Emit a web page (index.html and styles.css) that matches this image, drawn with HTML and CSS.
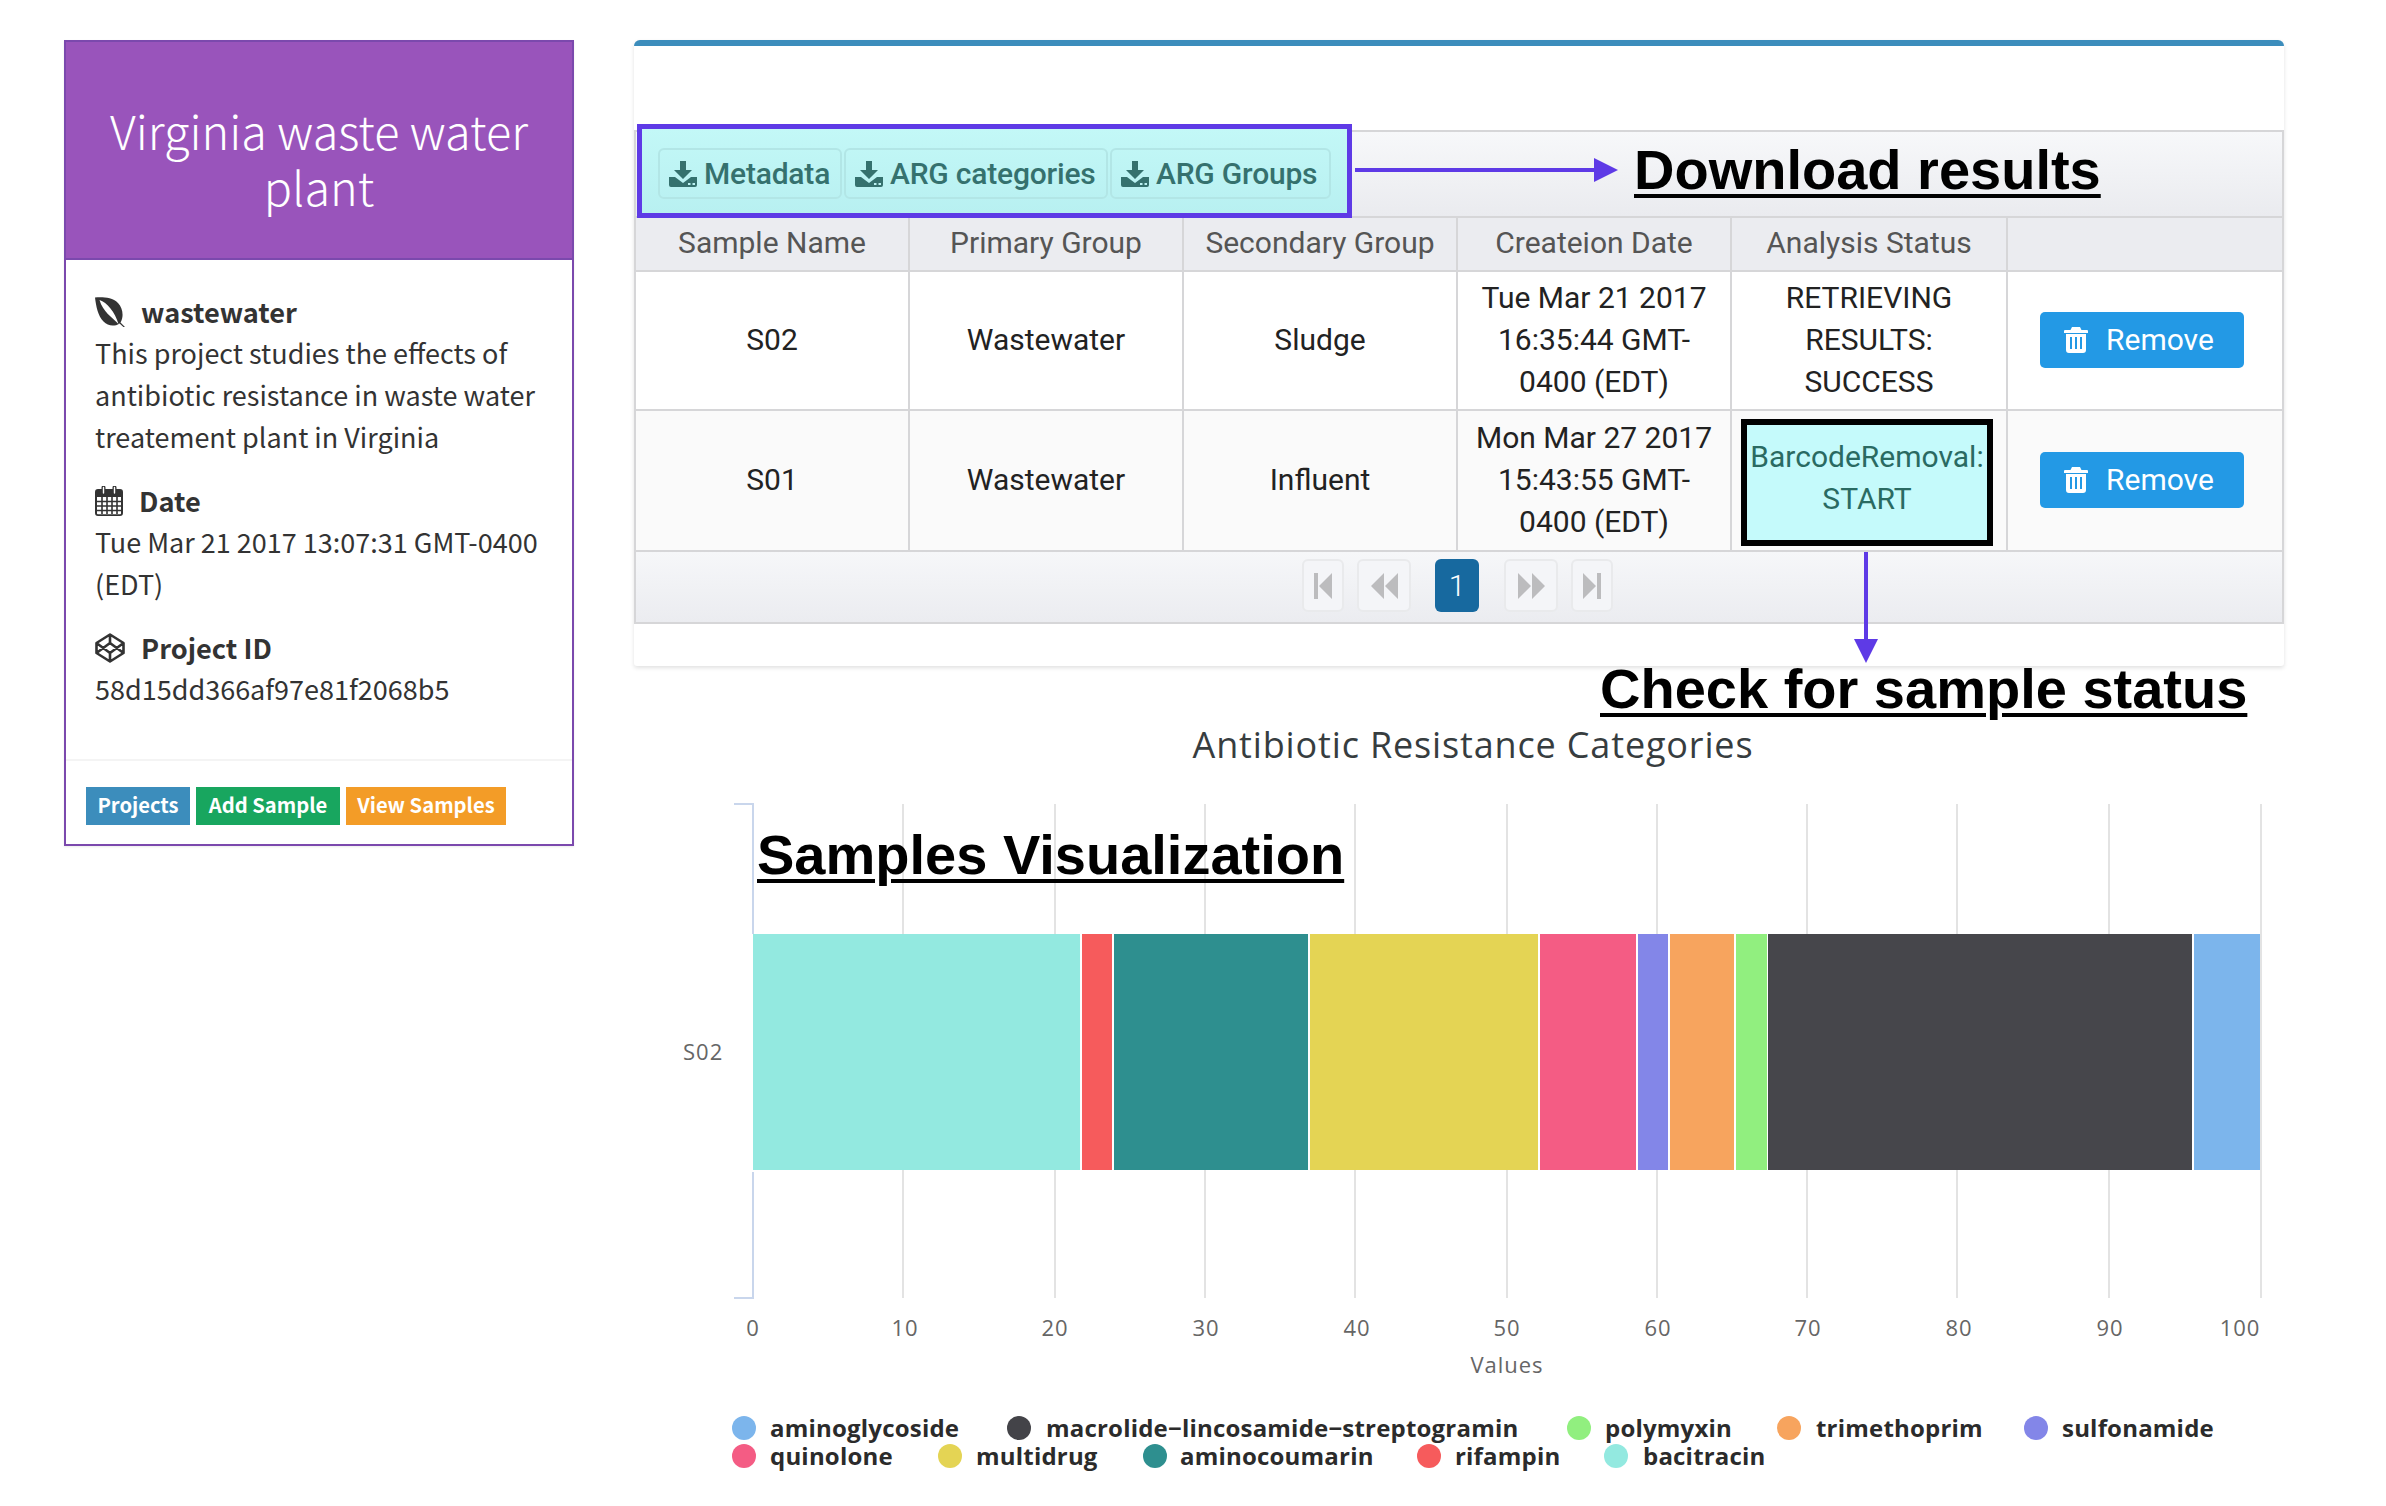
FILE: index.html
```html
<!DOCTYPE html>
<html lang="en">
<head>
<meta charset="utf-8">
<title>Virginia waste water plant</title>
<link rel="stylesheet" href="styles.css">
</head>
<body>
<div class="page">
  <aside class="card">
    <header class="card-head">Virginia waste water plant</header>
    <div class="card-body">
      <section class="info">
        <h3 class="label">
          <svg class="ico" width="30" height="30" viewBox="0 0 30 30"><path fill="#333" d="M0 .5C7 0 17 0 23 6c5 5 6 14 2.500 19.500L30 30l-.8.8-4.600-4.400C19 30 13 29 8.500 24.500 3 19 1 9 0 .5Z"/><path fill="#fff" d="M4.500 3C12 5.500 20 15 23.500 27 17 20 8 15 4.500 3Z"/></svg>
          wastewater
        </h3>
        <p class="text">This project studies the effects of antibiotic resistance in waste water treatement plant in Virginia</p>
      </section>
      <section class="info">
        <h3 class="label">
          <svg class="ico" width="28" height="30" viewBox="0 0 28 30"><path fill="#333" d="M3 3h3.500V1.500a2 2 0 0 1 4 0V3h7V1.500a2 2 0 0 1 4 0V3H25a3 3 0 0 1 3 3v21a3 3 0 0 1-3 3H3a3 3 0 0 1-3-3V6a3 3 0 0 1 3-3Z"/><path fill="#fff" d="M7.800 1.500a.7.7 0 0 1 1.400 0V7a.7.7 0 0 1-1.400 0ZM18.800 1.500a.7.7 0 0 1 1.400 0V7a.7.7 0 0 1-1.400 0ZM2 11h24v16.500a.8.8 0 0 1-.8.8H2.800a.8.8 0 0 1-.8-.8Z"/><path stroke="#333" stroke-width="1.600" fill="none" d="M2 15.500h24M2 20h24M2 24.500h24M7 11v17M12 11v17M17 11v17M22 11v17"/></svg>
          Date
        </h3>
        <p class="text">Tue Mar 21 2017 13:07:31 GMT-0400 (EDT)</p>
      </section>
      <section class="info">
        <h3 class="label">
          <svg class="ico" width="30" height="30" viewBox="0 0 30 30"><path fill="none" stroke="#333" stroke-width="2.600" stroke-linejoin="round" d="M15 1.500 28.500 10v10L15 28.500 1.500 20V10ZM15 1.500V10M15 20v8.500M1.500 10 15 20l13.500-10M1.500 20 15 10l13.500 10"/></svg>
          Project ID
        </h3>
        <p class="text">58d15dd366af97e81f2068b5</p>
      </section>
    </div>
    <footer class="card-foot">
      <a class="tag tag-blue">Projects</a>
      <a class="tag tag-green">Add Sample</a>
      <a class="tag tag-orange">View Samples</a>
    </footer>
  </aside>

  <main class="main">
    <div class="panel">
      <div class="toolbar">
        <div class="tools">
          <button class="dl dl-meta"><svg width="28" height="26" viewBox="0 0 28 26"><path class="dl-ico" fill-rule="evenodd" d="M11 0h6v9h6L14 18 5 9h6ZM0 16h6l8 6 8-6h6v8a2 2 0 0 1-2 2H2a2 2 0 0 1-2-2Zm19 6v2h2.500v-2Zm4.500 0v2H26v-2Z"/></svg>Metadata</button>
          <button class="dl dl-cat"><svg width="28" height="26" viewBox="0 0 28 26"><path class="dl-ico" fill-rule="evenodd" d="M11 0h6v9h6L14 18 5 9h6ZM0 16h6l8 6 8-6h6v8a2 2 0 0 1-2 2H2a2 2 0 0 1-2-2Zm19 6v2h2.500v-2Zm4.500 0v2H26v-2Z"/></svg>ARG categories</button>
          <button class="dl dl-group"><svg width="28" height="26" viewBox="0 0 28 26"><path class="dl-ico" fill-rule="evenodd" d="M11 0h6v9h6L14 18 5 9h6ZM0 16h6l8 6 8-6h6v8a2 2 0 0 1-2 2H2a2 2 0 0 1-2-2Zm19 6v2h2.500v-2Zm4.500 0v2H26v-2Z"/></svg>ARG Groups</button>
        </div>
        <div class="h-arrow"><span class="h-shaft"></span><span class="h-head"></span></div>
        <strong class="note note-dl">Download results</strong>
      </div>
      <table class="grid">
        <colgroup><col class="c1"><col class="c2"><col class="c3"><col class="c4"><col class="c5"><col class="c6"></colgroup>
        <thead>
          <tr><th>Sample Name</th><th>Primary Group</th><th>Secondary Group</th><th>Createion Date</th><th>Analysis Status</th><th></th></tr>
        </thead>
        <tbody>
          <tr class="row-a">
            <td>S02</td><td>Wastewater</td><td>Sludge</td>
            <td>Tue Mar 21 2017 16:35:44 GMT-0400 (EDT)</td>
            <td>RETRIEVING RESULTS: SUCCESS</td>
            <td><button class="remove"><svg width="24" height="26" viewBox="0 0 24 26"><path fill="#fff" fill-rule="evenodd" d="M8 0h8l1.500 3H23a1 1 0 0 1 1 1v2H0V4a1 1 0 0 1 1-1h5.500ZM2 7h20v16a3 3 0 0 1-3 3H5a3 3 0 0 1-3-3Zm4 3v12h2V10Zm5 0v12h2V10Zm5 0v12h2V10Z"/></svg>Remove</button></td>
          </tr>
          <tr class="row-b">
            <td>S01</td><td>Wastewater</td><td>Influent</td>
            <td>Mon Mar 27 2017 15:43:55 GMT-0400 (EDT)</td>
            <td><div class="status-box">BarcodeRemoval: START</div></td>
            <td><button class="remove"><svg width="24" height="26" viewBox="0 0 24 26"><path fill="#fff" fill-rule="evenodd" d="M8 0h8l1.500 3H23a1 1 0 0 1 1 1v2H0V4a1 1 0 0 1 1-1h5.500ZM2 7h20v16a3 3 0 0 1-3 3H5a3 3 0 0 1-3-3Zm4 3v12h2V10Zm5 0v12h2V10Zm5 0v12h2V10Z"/></svg>Remove</button></td>
          </tr>
        </tbody>
      </table>
      <nav class="pager">
        <a class="pg pg-s"><svg width="18" height="26" viewBox="0 0 18 26"><path class="pg-ico" d="M0 0h4v26H0ZM18 0v26L5 13Z"/></svg></a>
        <a class="pg pg-m"><svg width="27" height="26" viewBox="0 0 27 26"><path class="pg-ico" d="M13 0v26L0 13ZM27 0v26L14 13Z"/></svg></a>
        <a class="pg pg-now">1</a>
        <a class="pg pg-m pg-next"><svg width="27" height="26" viewBox="0 0 27 26"><path class="pg-ico" d="M0 0v26l13-13ZM14 0v26l13-13Z"/></svg></a>
        <a class="pg pg-s"><svg width="18" height="26" viewBox="0 0 18 26"><path class="pg-ico" d="M14 0h4v26h-4ZM0 0v26l13-13Z"/></svg></a>
      </nav>
      <div class="v-arrow"><span class="v-shaft"></span><span class="v-head"></span></div>
    </div>

    <strong class="note note-check">Check for sample status</strong>

    <section class="chart">
      <strong class="note note-vis">Samples Visualization</strong>
      <svg class="chart-svg" viewBox="634 690 1650 816">
        <text class="c-title" x="1473" y="758" text-anchor="middle">Antibiotic Resistance Categories</text>
        <g class="c-grid">
          <path d="M903 804V1298M1055 804V1298M1205 804V1298M1355 804V1298M1507 804V1298M1657 804V1298M1807 804V1298M1957 804V1298M2109 804V1298M2261 804V1298"/>
        </g>
        <path class="c-axis" d="M734 804H753V1298H734"/>
        <rect x="752" y="934" width="2" height="238" fill="#fff"/>
        <g>
          <rect x="753" y="934" width="327" height="236" fill="#93e9e0"/>
          <rect x="1082" y="934" width="30" height="236" fill="#f65b5c"/>
          <rect x="1114" y="934" width="194" height="236" fill="#2e8f8f"/>
          <rect x="1310" y="934" width="228" height="236" fill="#e4d454"/>
          <rect x="1540" y="934" width="96" height="236" fill="#f45c84"/>
          <rect x="1638" y="934" width="30" height="236" fill="#8386e8"/>
          <rect x="1670" y="934" width="64" height="236" fill="#f7a45e"/>
          <rect x="1736" y="934" width="31" height="236" fill="#91ef7f"/>
          <rect x="1768" y="934" width="424" height="236" fill="#46464b"/>
          <rect x="2194" y="934" width="66" height="236" fill="#7cb5ec"/>
        </g>
        <text class="c-lab" x="683" y="1060">S02</text>
        <g class="c-lab" text-anchor="middle">
          <text x="753" y="1336">0</text><text x="905" y="1336">10</text><text x="1055" y="1336">20</text><text x="1206" y="1336">30</text><text x="1357" y="1336">40</text><text x="1507" y="1336">50</text><text x="1658" y="1336">60</text><text x="1808" y="1336">70</text><text x="1959" y="1336">80</text><text x="2110" y="1336">90</text><text x="2240" y="1336">100</text>
          <text x="1507" y="1373">Values</text>
        </g>
        <g class="c-leg">
          <circle cx="744" cy="1428" r="12" fill="#7cb5ec"/><text x="770" y="1437">aminoglycoside</text>
          <circle cx="1019" cy="1428" r="12" fill="#434348"/><text x="1046" y="1437">macrolide−lincosamide−streptogramin</text>
          <circle cx="1579" cy="1428" r="12" fill="#91ef7f"/><text x="1605" y="1437">polymyxin</text>
          <circle cx="1789" cy="1428" r="12" fill="#f7a45e"/><text x="1816" y="1437">trimethoprim</text>
          <circle cx="2036" cy="1428" r="12" fill="#8386e8"/><text x="2062" y="1437">sulfonamide</text>
          <circle cx="744" cy="1456" r="12" fill="#f45c84"/><text x="770" y="1465">quinolone</text>
          <circle cx="950" cy="1456" r="12" fill="#e4d454"/><text x="976" y="1465">multidrug</text>
          <circle cx="1155" cy="1456" r="12" fill="#2e8f8f"/><text x="1180" y="1465">aminocoumarin</text>
          <circle cx="1429" cy="1456" r="12" fill="#f65b5c"/><text x="1455" y="1465">rifampin</text>
          <circle cx="1616" cy="1456" r="12" fill="#93e9e0"/><text x="1643" y="1465">bacitracin</text>
        </g>
      </svg>
    </section>
  </main>
</div>
</body>
</html>
```

FILE: styles.css
```css
* { box-sizing: border-box; }
html, body { margin: 0; padding: 0; background: #fff; }
.page {
  position: relative;
  display: flex;
  align-items: flex-start;
  width: 2386px;
  height: 1506px;
  padding: 40px 0 0 64px;
  overflow: hidden;
  font-family: Roboto, "Liberation Sans", sans-serif;
}

/* project card */
.card {
  width: 510px;
  height: 806px;
  flex: none;
  border: 2px solid #7b49ad;
  background: #fff;
  box-shadow: 0 1px 2px rgba(0, 0, 0, .08);
  display: flex;
  flex-direction: column;
  font-family: "Noto Sans CJK SC", "Noto Sans", sans-serif;
  color: #333;
}
.card-head {
  height: 218px;
  flex: none;
  padding: 60px 20px 0;
  background: #9954bb;
  border-bottom: 2px solid #7b49ad;
  color: #fff;
  font-size: 46.800px;
  font-weight: 300;
  line-height: 56px;
  text-align: center;
}
.card-body { flex: 1; padding: 31px 20px 0 29px; }
.info { margin-bottom: 22px; }
.label {
  display: flex;
  align-items: center;
  gap: 16px;
  margin: 0;
  font-size: 27.200px;
  font-weight: 700;
  line-height: 41px;
}
.ico { flex: none; }
.text { margin: 0; font-size: 27px; line-height: 42px; }
.card-foot {
  flex: none;
  display: flex;
  gap: 6px;
  height: 85px;
  padding: 26px 0 0 20px;
  border-top: 2px solid #f4f4f4;
}
.tag {
  height: 38px;
  color: #fff;
  font-size: 20.200px;
  font-weight: 700;
  line-height: 36px;
  text-align: center;
}
.tag-blue { width: 104px; background: #3c8dbc; }
.tag-green { width: 144px; background: #18a65f; }
.tag-orange { width: 160px; background: #f39c27; }

/* main column */
.main { width: 1650px; flex: none; margin-left: 60px; }
.panel {
  position: relative;
  height: 626px;
  background: #fff;
  border-top: 6px solid #3c8dbc;
  border-radius: 6px 6px 3px 3px;
  box-shadow: 0 2px 4px rgba(0, 0, 0, .12);
  padding-top: 84px;
}
.toolbar {
  display: flex;
  align-items: flex-start;
  height: 86px;
  border: 2px solid #d6d6d8;
  border-bottom: 0;
  background: linear-gradient(#f7f8fa, #eaebef);
}
.tools {
  position: relative;
  z-index: 1;
  display: flex;
  flex: none;
  gap: 2px;
  width: 715px;
  height: 94px;
  margin: -8px 0 0 1px;
  padding: 19px 0 0 16px;
  border: 5px solid #5e3ae6;
  background: linear-gradient(#c3f8f7, #b8f0f1);
}
.dl {
  display: flex;
  align-items: center;
  gap: 7px;
  height: 51px;
  padding: 0 0 0 9px;
  border: 2px solid #b2e6e6;
  border-radius: 6px;
  background: transparent;
  color: #35716e;
  font-family: Roboto, sans-serif;
  font-size: 30px;
  font-weight: 500;
  letter-spacing: -.2px;
  white-space: nowrap;
}
.dl-meta { width: 184px; }
.dl-cat { width: 264px; }
.dl-group { width: 221px; }
.dl-ico { fill: #35716e; }

.h-arrow { display: flex; align-items: center; flex: none; width: 263px; height: 24px; margin: 26px 0 0 3px; }
.h-shaft { flex: 1; height: 4px; background: #5e3ae6; }
.h-head { width: 0; height: 0; border-left: 24px solid #5e3ae6; border-top: 12px solid transparent; border-bottom: 12px solid transparent; }
.note {
  color: #000;
  font-family: "Liberation Sans", Arial, sans-serif;
  font-size: 56px;
  font-weight: 700;
  line-height: 64px;
  text-decoration: underline;
  text-decoration-thickness: 4px;
  text-underline-offset: 5px;
  white-space: nowrap;
}
.note-dl { margin: 6px 0 0 16px; }

/* table */
.grid {
  width: 100%;
  table-layout: fixed;
  border-collapse: collapse;
  font-size: 30px;
  line-height: 42px;
  text-align: center;
  color: #222;
}
.c1, .c2, .c3, .c4 { width: 274px; }
.c5 { width: 276px; }
.grid th, .grid td { padding: 0 10px 2px; border: 2px solid #d6d6d8; }
.grid th { height: 54px; background: #ebecf0; color: #555; font-weight: 400; }
.row-a td { height: 139px; }
.row-b td { height: 141px; background: #fafafa; }
.status-box {
  width: 252px;
  height: 127px;
  margin: 6px 0 0 -1px;
  padding-top: 11px;
  border: 6px solid #000;
  background: #c5fafb;
  color: #2a6a62;
}
.remove {
  display: inline-flex;
  align-items: center;
  gap: 18px;
  width: 204px;
  height: 56px;
  margin-right: 6px;
  padding: 0 0 0 24px;
  border: 0;
  border-radius: 5px;
  background: #2399e5;
  color: #fff;
  font-family: Roboto, sans-serif;
  font-size: 30px;
  vertical-align: middle;
}

/* pager */
.pager {
  display: flex;
  align-items: flex-start;
  justify-content: center;
  gap: 13px;
  height: 72px;
  padding: 7px 3px 0 0;
  border: 2px solid #d6d6d8;
  border-top: 0;
  background: linear-gradient(#f6f7f9, #ebecf0);
}
.pg {
  display: flex;
  align-items: center;
  justify-content: center;
  height: 53px;
  border: 2px solid #e9eaec;
  border-radius: 6px;
  background: #f4f5f8;
}
.pg-s { width: 42px; }
.pg-m { width: 54px; }
.pg-ico { fill: #bcbcbe; }
.pg-now {
  width: 44px;
  margin: 0 12px 0 11px;
  border: 0;
  background: #17699f;
  color: #fff;
  font-size: 30px;
  font-weight: 300;
}
.pg-next { margin-left: 0; }

/* annotations over the content */
.v-arrow {
  position: absolute;
  top: 506px;
  left: 1220px;
  width: 24px;
  height: 111px;
  display: flex;
  flex-direction: column;
  align-items: center;
}
.v-shaft { flex: 1; width: 4px; background: #5e3ae6; }
.v-head { width: 0; height: 0; border-top: 24px solid #5e3ae6; border-left: 12px solid transparent; border-right: 12px solid transparent; }
.note-check { position: absolute; top: 657px; left: 1600px; }
.note-vis { position: absolute; top: 823px; left: 757px; }

/* chart */
.chart { height: 816px; margin-top: 24px; }
.chart-svg { display: block; width: 1650px; height: 816px; }
.c-title { font-family: "Open Sans", sans-serif; font-size: 36px; fill: #373d3f; letter-spacing: .85px; }
.c-grid path { stroke: #e3e3e3; stroke-width: 2; fill: none; }
.c-axis { stroke: #c9d6ec; stroke-width: 2; fill: none; }
.c-lab { font-family: "Open Sans", sans-serif; font-size: 22px; fill: #666; letter-spacing: 1px; }
.c-leg text { font-family: "Open Sans", sans-serif; font-size: 24px; font-weight: 700; fill: #2b2b2b; letter-spacing: .2px; }
```
